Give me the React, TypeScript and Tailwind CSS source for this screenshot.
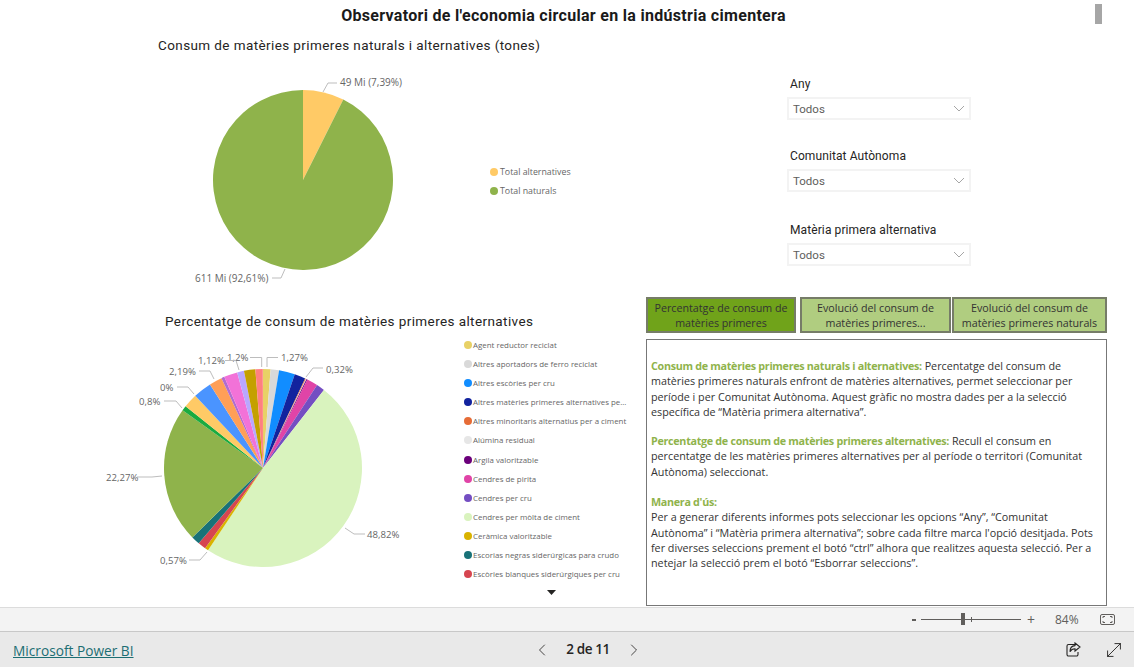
import { ChevronLeft, ChevronRight, MoveDiagonal } from 'lucide-react'

type Slice = { pct: number; color: string }

const mainSlices: Slice[] = [
  { pct: 7.39, color: '#FFCA66' },
  { pct: 92.61, color: '#8FB34B' },
]

const alternativeSlices: Slice[] = [
  { pct: 1.23, color: '#E8D166' },
  { pct: 1.37, color: '#D9D9D9' },
  { pct: 2.6, color: '#118DFF' },
  { pct: 1.8, color: '#12239E' },
  { pct: 0.15, color: '#E66C37' },
  { pct: 0.1, color: '#E6E6E6' },
  { pct: 0.15, color: '#6B007B' },
  { pct: 1.8, color: '#E044A7' },
  { pct: 1.35, color: '#744EC2' },
  { pct: 48.82, color: '#D9F3BE' },
  { pct: 0.57, color: '#D9B300' },
  { pct: 1.3, color: '#D64550' },
  { pct: 1.4, color: '#197278' },
  { pct: 22.27, color: '#8FB34B' },
  { pct: 0.8, color: '#1AAB40' },
  { pct: 2.3, color: '#FFCA66' },
  { pct: 3.0, color: '#4A94FF' },
  { pct: 2.1, color: '#FF9F57' },
  { pct: 0.5, color: '#B06CD0' },
  { pct: 2.19, color: '#F272D8' },
  { pct: 1.12, color: '#B9A7FF' },
  { pct: 1.85, color: '#C4A000' },
  { pct: 1.2, color: '#FF8080' },
]

const legendItems = [
  { label: 'Agent reductor reciclat', color: '#E8D166' },
  { label: 'Altres aportadors de ferro reciclat', color: '#D9D9D9' },
  { label: 'Altres escòries per cru', color: '#118DFF' },
  { label: 'Altres matèries primeres alternatives pe...', color: '#12239E' },
  { label: 'Altres minoritaris alternatius per a ciment', color: '#E66C37' },
  { label: 'Alúmina residual', color: '#E6E6E6' },
  { label: 'Argila valoritzable', color: '#6B007B' },
  { label: 'Cendres de pirita', color: '#E044A7' },
  { label: 'Cendres per cru', color: '#744EC2' },
  { label: 'Cendres per mòlta de ciment', color: '#D9F3BE' },
  { label: 'Ceràmica valoritzable', color: '#D9B300' },
  { label: 'Escorias negras siderúrgicas para crudo', color: '#197278' },
  { label: 'Escòries blanques siderúrgiques per cru', color: '#D64550' },
]

const pieLabels = [
  { text: '1,27%', x: 281, y: 361, line: '267,367 267,357.5 278,357.5' },
  { text: '1,2%', x: 227, y: 361, line: '261.7,367 261.7,357.5 250,357.5' },
  { text: '1,12%', x: 198, y: 364, line: '239,370 236,360.5 225,360.5' },
  { text: '2,19%', x: 169, y: 375, line: '199,371 210,371 214,379' },
  { text: '0%', x: 160, y: 391, line: '177,387 188,387 194,394' },
  { text: '0,8%', x: 139, y: 405, line: '164,401 176,401 182,408' },
  { text: '22,27%', x: 106, y: 481, line: '137,477 152,477 162,476' },
  { text: '0,57%', x: 160, y: 564, line: '189,560 200,560 207,552' },
  { text: '48,82%', x: 367, y: 538, line: '345,528 354,534 365,534' },
  { text: '0,32%', x: 326, y: 373, line: '306,377 313,368 323,368' },
]

const filters = [
  { label: 'Any', spacing: '' },
  { label: 'Comunitat Autònoma', spacing: 'mt-[29px]' },
  { label: 'Matèria primera alternativa', spacing: 'mt-[31px]' },
]

function Pie({ slices, cx, cy, r }: { slices: Slice[]; cx: number; cy: number; r: number }) {
  let total = 0
  return (
    <>
      {slices.map((s) => {
        const a0 = (total / 100) * Math.PI * 2
        total += s.pct
        const a1 = (total / 100) * Math.PI * 2
        const large = s.pct > 50 ? 1 : 0
        const d = `M${cx} ${cy}L${cx + r * Math.sin(a0)} ${cy - r * Math.cos(a0)}A${r} ${r} 0 ${large} 1 ${cx + r * Math.sin(a1)} ${cy - r * Math.cos(a1)}Z`
        return <path key={s.color + s.pct} d={d} fill={s.color} />
      })}
    </>
  )
}

function FilterBox({ label, spacing }: { label: string; spacing: string }) {
  return (
    <div className={spacing}>
      <div className="h-[20px] pl-[3px] font-['Roboto',sans-serif] text-[12px] leading-[14px] tracking-[0.1px] text-[#252423]">{label}</div>
      <div className="flex h-[23px] w-[184px] items-center justify-between border-2 border-[#f3f3f3] bg-white pl-[4px] pr-[4px] font-['Roboto',sans-serif] text-[11.5px] text-[#605e5c]">
        <span className="pt-[2px]">Todos</span>
        <svg width="12" height="7" viewBox="0 0 12 7" fill="none" stroke="#a6a6a6" strokeWidth="1">
          <path d="M1 1l5 5 5-5" />
        </svg>
      </div>
    </div>
  )
}

function TabButton({ width, active, lines }: { width: string; active?: boolean; lines: string[] }) {
  return (
    <div className={`flex h-[36px] flex-col items-center justify-center border-2 border-[#767c68] pt-[2px] text-[10.7px] leading-[15px] text-[#333] ${width} ${active ? 'bg-[#70A31A]' : 'bg-[#B0CD80]'}`}>
      {lines.map((l) => (
        <span key={l}>{l}</span>
      ))}
    </div>
  )
}

export default function App() {
  return (
    <div className="flex h-[667px] w-[1134px] flex-col overflow-hidden bg-white font-['Open_Sans',sans-serif]">
      <div className="relative h-[607px]">
        <div className="absolute left-[1095px] top-[4px] h-[20px] w-[7px] bg-[#a6a6a6]" />
        <div className="flex h-[31px] items-center justify-center pr-[7px] font-['Roboto',sans-serif] text-[16px] font-bold tracking-[0.3px] text-[#1a1a1a]">
          Observatori de l'economia circular en la indústria cimentera
        </div>

        <div className="grid h-[259px] grid-cols-[646px_1fr]">
          <div>
            <div className="flex h-[29px] items-center pl-[158px] font-['Roboto',sans-serif] text-[13.5px] tracking-[0.4px] text-[#252423]">
              Consum de matèries primeres naturals i alternatives (tones)
            </div>
            <div className="flex items-start">
              <svg width="480" height="230" viewBox="0 60 480 230" className="shrink-0">
                <Pie slices={mainSlices} cx={303} cy={180} r={90} />
                <polyline points="323,92 328,83 337,83" fill="none" stroke="#bdbdbd" />
                <polyline points="285,269 281,278 272,278" fill="none" stroke="#bdbdbd" />
                <text x="340" y="86" fontSize="10" fill="#666">49 Mi (7,39%)</text>
                <text x="195" y="282" fontSize="10" fill="#666">611 Mi (92,61%)</text>
              </svg>
              <div className="ml-[10px] mt-[107px] flex flex-col gap-[9px] text-[8.8px] leading-[10px] text-[#666]">
                <div className="flex items-center gap-[2px]">
                  <span className="h-[8px] w-[8px] rounded-full bg-[#FFCA66]" />
                  Total alternatives
                </div>
                <div className="flex items-center gap-[2px]">
                  <span className="h-[8px] w-[8px] rounded-full bg-[#8FB34B]" />
                  Total naturals
                </div>
              </div>
            </div>
          </div>
          <div className="pl-[141px] pt-[46px]">
            {filters.map((f) => (
              <FilterBox key={f.label} label={f.label} spacing={f.spacing} />
            ))}
          </div>
        </div>

        <div className="grid h-[317px] grid-cols-[646px_1fr]">
          <div>
            <div className="flex h-[45px] items-end pb-[4px] pl-[165px] font-['Roboto',sans-serif] text-[13.5px] tracking-[0.4px] text-[#252423]">
              Percentatge de consum de matèries primeres alternatives
            </div>
            <div className="flex items-start">
              <svg width="350" height="272" viewBox="100 335 350 272" className="ml-[100px] shrink-0">
                <Pie slices={alternativeSlices} cx={263} cy={468} r={99} />
                {pieLabels.map((l) => (
                  <g key={l.text}>
                    <polyline points={l.line} fill="none" stroke="#bdbdbd" />
                    <text x={l.x} y={l.y} fontSize="9.6" fill="#666">{l.text}</text>
                  </g>
                ))}
              </svg>
              <div className="relative ml-[14px] flex w-[170px] flex-col pt-[5px] text-[7.9px] leading-[10px] text-[#666]">
                {legendItems.map((item) => (
                  <div key={item.label} className="mb-[9.1px] flex items-center gap-[1px] whitespace-nowrap">
                    <span className="h-[8px] w-[8px] shrink-0 rounded-full" style={{ backgroundColor: item.color }} />
                    {item.label}
                  </div>
                ))}
                <div className="mt-[2px] pl-[83px]">
                  <svg width="9" height="5" viewBox="0 0 9 5"><path d="M0 0h9L4.5 5z" fill="#252423" /></svg>
                </div>
              </div>
            </div>
          </div>
          <div className="pt-[7px]">
            <div className="flex">
              <TabButton width="w-[150px]" active lines={['Percentatge de consum de', 'matèries primeres']} />
              <div className="ml-[4px]">
                <TabButton width="w-[151px]" lines={['Evolució del consum de', 'matèries primeres...']} />
              </div>
              <div className="ml-[1px]">
                <TabButton width="w-[155px]" lines={['Evolució del consum de', 'matèries primeres naturals']} />
              </div>
            </div>
            <div className="mt-[6px] h-[267px] w-[461px] whitespace-nowrap border border-[#777] px-[4px] pt-[19px] text-[10.75px] leading-[15.3px] text-[#333]">
              <p>
                <span className="font-bold tracking-[-0.3px] text-[#8FB34B]">Consum de matèries primeres naturals i alternatives:</span> Percentatge del consum de
              </p>
              <p>matèries primeres naturals enfront de matèries alternatives, permet seleccionar per</p>
              <p>període i per Comunitat Autònoma. Aquest gràfic no mostra dades per a la selecció</p>
              <p>específica de “Matèria primera alternativa”.</p>
              <p className="mt-[14px]">
                <span className="font-bold tracking-[-0.3px] text-[#8FB34B]">Percentatge de consum de matèries primeres alternatives:</span> Recull el consum en
              </p>
              <p>percentatge de les matèries primeres alternatives per al període o territori (Comunitat</p>
              <p>Autònoma) seleccionat.</p>
              <p className="mt-[15px] font-bold tracking-[-0.3px] text-[#8FB34B]">Manera d'ús:</p>
              <p>Per a generar diferents informes pots seleccionar les opcions “Any”, “Comunitat</p>
              <p>Autònoma” i “Matèria primera alternativa”; sobre cada filtre marca l'opció desitjada. Pots</p>
              <p>fer diverses seleccions prement el botó “ctrl” alhora que realitzes aquesta selecció. Per a</p>
              <p>netejar la selecció prem el botó “Esborrar seleccions”.</p>
            </div>
          </div>
        </div>
      </div>

      <div className="flex h-[24px] items-center justify-end border-t border-[#dcdcdc] bg-[#f3f3f3] pr-[19px] text-[12px] text-[#605e5c]">
        <span className="mr-[5px] h-[2px] w-[4px] bg-[#605e5c]" />
        <div className="relative h-[1px] w-[100px] bg-[#605e5c]">
          <span className="absolute left-[40px] top-[-6px] h-[12px] w-[4px] bg-[#605e5c]" />
          <span className="absolute left-[50px] top-[-2px] h-[5px] w-[1px] bg-[#605e5c]" />
        </div>
        <span className="ml-[6px] w-[10px] text-[14px] leading-none">+</span>
        <span className="ml-[18px] w-[24px]">84%</span>
        <svg width="15" height="11" viewBox="0 0 15 11" fill="none" stroke="#605e5c" className="ml-[21px]">
          <rect x="0.5" y="0.5" width="14" height="10" rx="1.5" />
          <path d="M3 4V2.5h2M12 4V2.5h-2M3 7v1.5h2M12 7v1.5h-2" />
        </svg>
      </div>

      <div className="flex h-[36px] items-center justify-between border-t border-[#c8c8c8] bg-[#e9e9e9] pl-[13px] pr-[9px]">
        <span className="w-[238px] pt-[4px] text-[13.7px] text-[#1c6e73] underline">Microsoft Power BI</span>
        <div className="flex items-center text-[#252423]">
          <ChevronLeft size={20} strokeWidth={1} />
          <span className="mx-[14px] text-[13.5px] font-semibold tracking-[-0.4px]">2 de 11</span>
          <ChevronRight size={20} strokeWidth={1} />
        </div>
        <div className="flex w-[200px] items-center justify-end gap-[22px] text-[#252423]">
          <svg width="15" height="15" viewBox="0 0 15 15" fill="none" stroke="currentColor" strokeWidth="1.1">
            <path d="M9 2.5H2.5a1.5 1.5 0 0 0-1.5 1.5v8.5a1.5 1.5 0 0 0 1.5 1.5h8a1.5 1.5 0 0 0 1.5-1.5V10" />
            <path d="M9 1l5 4-5 4V6.8c-2.5 0-4 1-5 3 0-3.5 2-6 5-6.2z" />
          </svg>
          <MoveDiagonal size={22} strokeWidth={1} />
        </div>
      </div>
    </div>
  )
}
